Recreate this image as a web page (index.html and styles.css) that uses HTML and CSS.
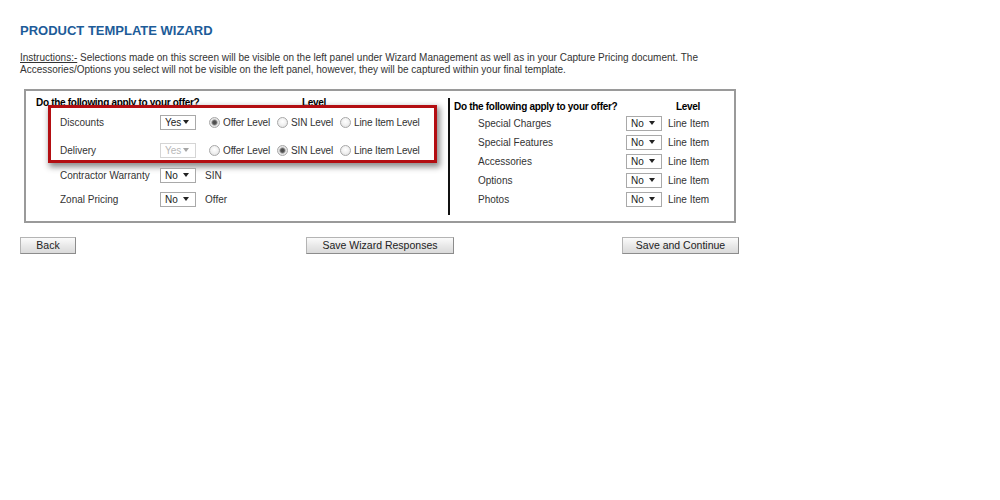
FILE: index.html
```html
<!DOCTYPE html>
<html lang="en">
<head>
<meta charset="utf-8">
<title>Product Template Wizard</title>
<link rel="stylesheet" href="styles.css">
</head>
<body>
<div class="page">
  <h1 class="title">PRODUCT TEMPLATE WIZARD</h1>
  <p class="instructions"><span class="inst-label">Instructions:-</span> Selections made on this screen will be visible on the left panel under Wizard Management as well as in your Capture Pricing document. The Accessories/Options you select will not be visible on the left panel, however, they will be captured within your final template.</p>

  <div class="wizard">
    <div class="col-left">
      <div class="head head-left"><span class="q">Do the following apply to your offer?</span><span>Level</span></div>
      <div class="highlight">
        <div class="row">
          <span class="label">Discounts</span>
          <span class="sel"><select><option>Yes</option><option>No</option></select></span>
          <span class="levels">
            <label class="opt"><input type="radio" name="disc" checked>Offer Level</label>
            <label class="opt"><input type="radio" name="disc">SIN Level</label>
            <label class="opt"><input type="radio" name="disc">Line Item Level</label>
          </span>
        </div>
        <div class="row row-second">
          <span class="label">Delivery</span>
          <span class="sel sel-disabled"><select disabled><option>Yes</option><option>No</option></select></span>
          <span class="levels">
            <label class="opt"><input type="radio" name="deliv">Offer Level</label>
            <label class="opt"><input type="radio" name="deliv" checked>SIN Level</label>
            <label class="opt"><input type="radio" name="deliv">Line Item Level</label>
          </span>
        </div>
      </div>
      <div class="plain-rows">
        <div class="row">
          <span class="label">Contractor Warranty</span>
          <span class="sel"><select><option>No</option><option>Yes</option></select></span>
          <span class="level-text">SIN</span>
        </div>
        <div class="row">
          <span class="label">Zonal Pricing</span>
          <span class="sel"><select><option>No</option><option>Yes</option></select></span>
          <span class="level-text">Offer</span>
        </div>
      </div>
    </div>

    <div class="col-right">
      <div class="head head-right"><span class="q">Do the following apply to your offer?</span><span>Level</span></div>
      <div class="row r-row">
        <span class="label r-label">Special Charges</span>
        <span class="sel"><select><option>No</option><option>Yes</option></select></span>
        <span class="r-level">Line Item</span>
      </div>
      <div class="row r-row">
        <span class="label r-label">Special Features</span>
        <span class="sel"><select><option>No</option><option>Yes</option></select></span>
        <span class="r-level">Line Item</span>
      </div>
      <div class="row r-row">
        <span class="label r-label">Accessories</span>
        <span class="sel"><select><option>No</option><option>Yes</option></select></span>
        <span class="r-level">Line Item</span>
      </div>
      <div class="row r-row">
        <span class="label r-label">Options</span>
        <span class="sel"><select><option>No</option><option>Yes</option></select></span>
        <span class="r-level">Line Item</span>
      </div>
      <div class="row r-row">
        <span class="label r-label">Photos</span>
        <span class="sel"><select><option>No</option><option>Yes</option></select></span>
        <span class="r-level">Line Item</span>
      </div>
    </div>
  </div>

  <div class="actions">
    <div class="act-cell"><button class="btn btn-back" type="button">Back</button></div>
    <div class="act-cell"><button class="btn btn-save" type="button">Save Wizard Responses</button></div>
    <div class="act-cell"><button class="btn btn-continue" type="button">Save and Continue</button></div>
  </div>
</div>
</body>
</html>
```

FILE: styles.css
```css
* { box-sizing: border-box; }

html, body {
  margin: 0;
  padding: 0;
  background: #fff;
}

body {
  font-family: "Liberation Sans", Arial, sans-serif;
  font-size: 10px;
  color: #333;
}

.page {
  padding: 23px 0 0 20px;
}

.title {
  margin: 0;
  font-size: 13px;
  line-height: 16px;
  font-weight: bold;
  color: #1d5c99;
}

.instructions {
  margin: 13px 0 0 0;
  width: 680px;
  font-size: 10px;
  line-height: 12px;
  color: #333;
}

.inst-label {
  text-decoration: underline;
}

/* ---- main wizard box ---- */
.wizard {
  margin: 13px 0 0 4px;
  width: 712px;
  border: 2px solid #9a9a9a;
  padding: 5px 0 0 0;
  display: flex;
  align-items: flex-start;
}

.col-left {
  width: 422px;
  flex-shrink: 0;
  padding-left: 10px;
}

.col-right {
  width: 286px;
  flex-shrink: 0;
  margin: 2px 0 6px 0;
  border-left: 2px solid #111;
  padding: 2px 0 6px 4px;
}

.head {
  display: flex;
  font-weight: bold;
  color: #000;
  line-height: 13px;
  letter-spacing: -0.3px;
  white-space: nowrap;
}

.head-left .q { width: 266px; flex-shrink: 0; }
.head-right .q { width: 222px; flex-shrink: 0; }

.row {
  display: flex;
  align-items: center;
  height: 20px;
  white-space: nowrap;
}

.label {
  width: 100px;
  flex-shrink: 0;
  color: #333;
}

/* highlight box around first two rows */
.highlight {
  position: relative;
  margin: -4px 0 0 12px;
  width: 389px;
  border: 3px solid #b30e12;
  background: #fff;
  padding: 4px 0 0 9px;
  box-shadow: 2px 3px 6px 1px rgba(0, 0, 0, 0.45);
}

.row-second {
  margin-top: 8px;
}

.plain-rows {
  padding: 2px 0 0 24px;
  display: flex;
  flex-direction: column;
  gap: 4px;
}

/* selects */
.sel {
  position: relative;
  display: inline-block;
  flex-shrink: 0;
  width: 36px;
  height: 15px;
  margin-right: 9px;
}

.sel select {
  -webkit-appearance: none;
  appearance: none;
  display: block;
  width: 36px;
  height: 15px;
  margin: 0;
  padding: 0 0 0 4px;
  border: 1px solid #a9a9a9;
  border-radius: 0;
  background: #fff;
  font-family: "Liberation Sans", Arial, sans-serif;
  font-size: 10px;
  line-height: 13px;
  color: #222;
  outline: none;
}

.sel::after {
  content: "";
  position: absolute;
  right: 7px;
  top: 5px;
  width: 0;
  height: 0;
  border-left: 3px solid transparent;
  border-right: 3px solid transparent;
  border-top: 4px solid #222;
  pointer-events: none;
}

.sel-disabled select {
  color: #9a9a9a;
  border-color: #c4c4c4;
}

.sel-disabled::after {
  border-top-color: #a5a5a5;
}

/* radio options */
.levels {
  display: flex;
  align-items: center;
  flex-shrink: 0;
  padding-left: 4px;
}

.opt {
  display: flex;
  align-items: center;
  flex-shrink: 0;
  margin-right: 7px;
  font-size: 10px;
  letter-spacing: -0.15px;
  color: #333;
  white-space: nowrap;
}

.opt input {
  -webkit-appearance: none;
  appearance: none;
  flex-shrink: 0;
  width: 11px;
  height: 11px;
  margin: 0 3px 0 0;
  border: 1px solid #a8a8a8;
  border-radius: 50%;
  background: radial-gradient(circle at 50% 40%, #ffffff 0, #f2f2f2 45%, #dcdcdc 100%);
}

.opt input:checked {
  background: radial-gradient(circle at 50% 50%, #4a4a4a 0, #555 1.8px, #9a9a9a 2.6px, #e8e8e8 3.6px, #dadada 100%);
}

.level-text {
  color: #333;
}

/* right column */
.head-right {
  margin-bottom: 1px;
}

.r-row {
  height: 19px;
  padding-left: 24px;
}

.r-label {
  width: 148px;
}

.r-row .sel {
  margin-right: 6px;
}

.r-level {
  color: #333;
}

/* action buttons */
.actions {
  margin-top: 14px;
  width: 720px;
  display: grid;
  grid-template-columns: 286px 316px auto;
}

.btn {
  display: block;
  height: 17px;
  padding: 0;
  border: 1px solid;
  border-color: #b4b4b4 #8c8c8c #8c8c8c #b4b4b4;
  border-radius: 0;
  background: linear-gradient(#fbfbfb, #e9e9e9 50%, #dadada);
  font-family: "Liberation Sans", Arial, sans-serif;
  font-size: 10.5px;
  line-height: 15px;
  color: #222;
  text-align: center;
}

.btn-back { width: 56px; }
.btn-save { width: 148px; }
.btn-continue { width: 117px; }
```
